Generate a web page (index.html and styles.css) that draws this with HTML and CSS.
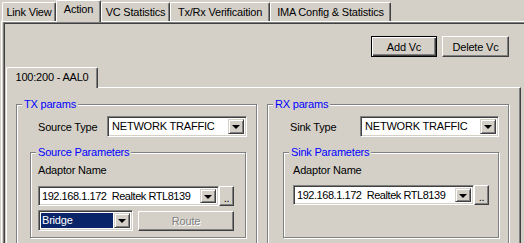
FILE: index.html
```html
<!DOCTYPE html>
<html lang="en">
<head>
    <meta charset="UTF-8">
    <title>Action</title>
    <link rel="stylesheet" href="styles.css">
</head>
<body>
    <div class="tabs">
        <div class="tab w-link">Link View</div>
        <div class="tab active w-action">Action</div>
        <div class="tab w-vc">VC Statistics</div>
        <div class="tab w-txrx">Tx/Rx Verificaition</div>
        <div class="tab w-ima">IMA Config &amp; Statistics</div>
    </div>

    <div class="page">
        <div class="frame">
            <!-- кнопки VC -->
            <div class="actions">
                <button class="btn default w-add">Add Vc</button>
                <button class="btn w-del">Delete Vc</button>
            </div>

            <div class="subtabs">
                <div class="subtab">100:200 - AAL0</div>
            </div>

            <div class="subpage">
                <div class="columns">
                    <!-- TX -->
                    <div class="group tx">
                        <div class="group-title">TX params</div>
                        <div class="row type-row">
                            <span class="label">Source Type</span>
                            <div class="combo w-type">
                                <span class="combo-text">NETWORK TRAFFIC</span>
                                <span class="drop"><i></i></span>
                            </div>
                        </div>
                        <div class="group sub">
                            <div class="group-title">Source Parameters</div>
                            <div class="label adaptor">Adaptor Name</div>
                            <div class="row adaptor-row">
                                <div class="combo short w-adaptor">
                                    <span class="combo-text">192.168.1.172&nbsp; Realtek RTL8139</span>
                                    <span class="drop"><i></i></span>
                                </div>
                                <button class="btn dots">..</button>
                            </div>
                            <div class="row bridge-row">
                                <div class="combo w-bridge">
                                    <span class="combo-text selected">Bridge</span>
                                    <span class="drop"><i></i></span>
                                </div>
                                <button class="btn route" disabled>Route</button>
                            </div>
                        </div>
                    </div>

                    <!-- RX -->
                    <div class="group rx">
                        <div class="group-title">RX params</div>
                        <div class="row type-row rx-type">
                            <span class="label">Sink Type</span>
                            <div class="combo w-type">
                                <span class="combo-text">NETWORK TRAFFIC</span>
                                <span class="drop"><i></i></span>
                            </div>
                        </div>
                        <div class="group sub sink">
                            <div class="group-title">Sink Parameters</div>
                            <div class="label adaptor">Adaptor Name</div>
                            <div class="row adaptor-row rx-adaptor">
                                <div class="combo short w-adaptor">
                                    <span class="combo-text">192.168.1.172&nbsp; Realtek RTL8139</span>
                                    <span class="drop"><i></i></span>
                                </div>
                                <button class="btn dots">..</button>
                            </div>
                        </div>
                    </div>
                </div>
            </div>
        </div>
    </div>
</body>
</html>
```

FILE: styles.css
```css
body {
    font-family: "Liberation Sans", Arial, sans-serif;
    font-size: 11px;
    letter-spacing: -0.2px;
    background-color: #d4d0c8;
    color: #000;
    margin: 0;
    width: 524px;
    height: 243px;
    overflow: hidden;
}

/* верхние вкладки */
.tabs {
    display: flex;
    align-items: flex-end;
    height: 21px;
    padding-left: 2px;
}

.tab {
    height: 19px;
    box-sizing: border-box;
    border-top: 1px solid #fff;
    border-left: 1px solid #fff;
    border-right: 1px solid #404040;
    border-radius: 2px 2px 0 0;
    box-shadow: inset -1px 0 0 #808080;
    text-align: center;
    line-height: 17px;
    padding-top: 1px;
    white-space: nowrap;
}

.tab.active {
    height: 22px;
    margin-bottom: -1px;
    background-color: #d4d0c8;
    position: relative;
    z-index: 1;
    padding-top: 0;
}

.w-link { width: 54px; }
.w-action { width: 45px; }
.w-vc { width: 69px; }
.w-txrx { width: 100px; }
.w-ima { width: 121px; }

.page {
    margin-left: 1px;
    height: 221px;
    overflow: hidden;
    border-top: 1px solid #fff;
    border-left: 1px solid #fff;
}

.frame {
    margin-left: 1px;
    width: 521px;
    height: 221px;
    border-top: 1px solid #808080;
    border-left: 1px solid #808080;
    box-shadow: inset 1px 1px 0 #404040;
    overflow: hidden;
}

/* кнопки */
.btn {
    font-family: inherit;
    font-size: 11px;
    letter-spacing: -0.2px;
    color: #000;
    background-color: #d4d0c8;
    border: 1px solid;
    border-color: #fff #404040 #404040 #fff;
    box-shadow: inset -1px -1px 0 #808080;
    padding: 0;
    height: 21px;
    box-sizing: border-box;
}

.btn.default {
    border: 1px solid #000;
    box-shadow: inset 1px 1px 0 #fff, inset -1px -1px 0 #404040, inset -2px -2px 0 #808080;
}

.actions {
    display: flex;
    gap: 5px;
    padding: 13px 0 0 367px;
}

.w-add { width: 66px; }
.w-del { width: 67px; }

/* вложенная вкладка */
.subtabs {
    display: flex;
    margin: 10px 0 0 2px;
}

.subtab {
    width: 92px;
    height: 21px;
    margin-bottom: -1px;
    box-sizing: border-box;
    border-top: 1px solid #fff;
    border-left: 1px solid #fff;
    border-right: 1px solid #404040;
    border-radius: 2px 2px 0 0;
    box-shadow: inset -1px 0 0 #808080;
    background-color: #d4d0c8;
    position: relative;
    z-index: 1;
    text-align: center;
    line-height: 18px;
}

.subpage {
    margin-left: 2px;
    width: 513px;
    height: 160px;
    border-top: 1px solid #fff;
    border-left: 1px solid #fff;
    border-right: 1px solid #404040;
    box-shadow: inset -1px 0 0 #808080;
    overflow: hidden;
}

.columns {
    display: flex;
    gap: 10px;
    padding: 16px 0 0 9px;
}

/* группы */
.group {
    border: 1px solid #808080;
    box-shadow: 1px 1px 0 #fff, inset 1px 1px 0 #fff;
    box-sizing: border-box;
    height: 150px;
}

.tx { width: 241px; }
.rx { width: 242px; }

.group-title {
    width: fit-content;
    margin: -7px 0 0 5px;
    padding: 0 2px;
    line-height: 13px;
    background-color: #d4d0c8;
    color: #0000ff;
}

.row {
    display: flex;
    align-items: center;
}

.type-row {
    margin-top: 5px;
    padding-left: 21px;
}

.type-row .label {
    width: 69px;
}

.rx-type {
    padding-left: 22px;
}

.rx-type .label {
    width: 70px;
}

.w-type { width: 140px; }
.rx .w-type { width: 139px; }

.sub {
    width: 216px;
    height: 86px;
    margin: 15px 0 0 13px;
}

.sink {
    margin-left: 15px;
}

.adaptor {
    margin-top: 5px;
    padding-left: 7px;
    line-height: 13px;
}

.sink .adaptor {
    padding-left: 9px;
}

.adaptor-row {
    margin-top: 9px;
    padding-left: 7px;
}

.rx-adaptor {
    margin-top: 8px;
    padding-left: 9px;
}

/* выпадающие списки */
.combo {
    display: flex;
    height: 21px;
    box-sizing: border-box;
    background-color: #fff;
    border: 1px solid;
    border-color: #808080 #fff #fff #808080;
    box-shadow: inset 1px 1px 0 #404040, inset -1px -1px 0 #d4d0c8;
    padding: 2px;
}

.combo.short {
    height: 20px;
}

.combo-text {
    flex: 1;
    padding-left: 2px;
    line-height: 15px;
    white-space: nowrap;
    overflow: hidden;
}

.short .combo-text {
    letter-spacing: -0.45px;
    padding-left: 1px;
}

.combo-text.selected {
    background-color: #0a246a;
    color: #fff;
    padding-left: 1px;
    margin: 0 1px 0 0;
}

.drop {
    width: 16px;
    flex: none;
    box-sizing: border-box;
    border: 1px solid;
    border-color: #d4d0c8 #404040 #404040 #d4d0c8;
    box-shadow: inset 1px 1px 0 #fff, inset -1px -1px 0 #808080;
    background-color: #d4d0c8;
    display: flex;
    align-items: center;
    justify-content: center;
}

.drop i {
    width: 0;
    height: 0;
    border-left: 4px solid transparent;
    border-right: 4px solid transparent;
    border-top: 4px solid #000;
    margin-top: 1px;
}

.w-adaptor { width: 181px; }
.w-bridge { width: 95px; }

.dots {
    width: 15px;
    height: 20px;
    line-height: 14px;
    padding-top: 4px;
}

.bridge-row {
    margin-top: 4px;
    padding-left: 7px;
    gap: 5px;
}

.route {
    width: 96px;
    height: 20px;
    color: #808080;
    text-shadow: 1px 1px 0 #fff;
}
```
